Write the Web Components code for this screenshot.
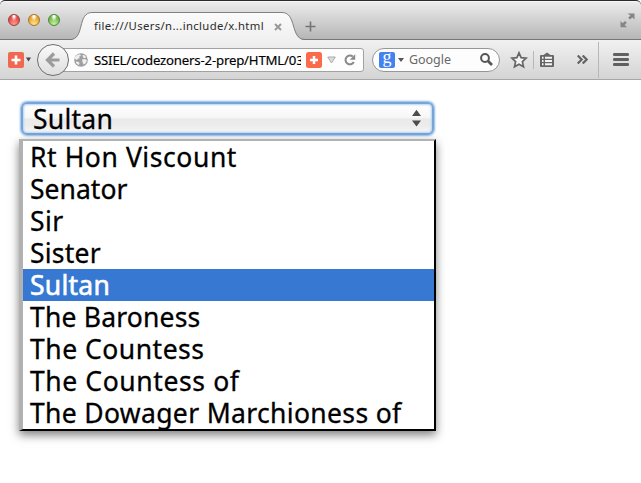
<!DOCTYPE html>
<html lang="en">
<head>
<meta charset="utf-8">
<title>x.html</title>
<style>
html,body{margin:0;height:100%;overflow:hidden;background:#fff}
body{font-family:"Noto Sans","Open Sans",sans-serif;color:#000}
</style>
</head>
<body>
<browser-window>
  <title-bar slot="title"><browser-tab slot="tab"><fit-text w="170">file:///Users/n...include/x.html</fit-text></browser-tab></title-bar>
  <tool-bar slot="tools">
    <fit-text slot="url" w="209.5">SSIEL/codezoners-2-prep/HTML/03</fit-text>
    <fit-text slot="search" w="42">Google</fit-text>
  </tool-bar>
  <drop-select><fit-text w="80">Sultan</fit-text></drop-select>
  <option-list>
    <list-option><fit-text w="207">Rt Hon Viscount</fit-text></list-option>
    <list-option><fit-text w="97.5">Senator</fit-text></list-option>
    <list-option><fit-text w="33.5">Sir</fit-text></list-option>
    <list-option><fit-text w="71">Sister</fit-text></list-option>
    <list-option selected><fit-text w="80">Sultan</fit-text></list-option>
    <list-option><fit-text w="170.5">The Baroness</fit-text></list-option>
    <list-option><fit-text w="174.5">The Countess</fit-text></list-option>
    <list-option><fit-text w="209.5">The Countess of</fit-text></list-option>
    <list-option><fit-text w="371.5">The Dowager Marchioness of</fit-text></list-option>
  </option-list>
</browser-window>
<script>
const define = (name, html, ready) => customElements.define(name, class extends HTMLElement {
  constructor() {
    super();
    this.attachShadow({ mode: 'open' }).innerHTML = html;
  }
  connectedCallback() { if (ready) ready(this); }
});

// Text whose tracking is adjusted so that it spans the width in its "w" attribute.
define('fit-text', `<style>:host{display:inline-block;white-space:pre;flex:none}</style><slot></slot>`, el => {
  requestAnimationFrame(() => {
    const natural = el.getBoundingClientRect().width;
    const count = el.textContent.length;
    el.style.letterSpacing = ((+el.getAttribute('w') - natural) / count) + 'px';
  });
});

define('browser-window', `<style>
:host{display:flex;flex-direction:column;height:483px;width:641px;background:#fff}
main{display:flex;flex-direction:column;padding:22px 0 0 19px;align-items:flex-start}
</style><slot name="title"></slot><slot name="tools"></slot><main><slot></slot></main>`);

define('title-bar', `<style>
:host{display:flex;box-sizing:border-box;height:40px;border-top:1px solid #2d2730;background:linear-gradient(#ededed,#dcdcdc 30%,#b5b5b5);border-radius:5px 5px 0 0;box-shadow:inset 0 -1px #777,inset 0 1px #f6f6f6}
.lights{display:flex;gap:8px;padding:13px 0 0 8px;width:64px;flex:none}
i{width:12px;height:12px;box-sizing:border-box;border-radius:50%;border:1px solid;}
.r{background:radial-gradient(ellipse at 50% 12%,#fff 0 8%,#f7b0ac 20%,transparent 42%),radial-gradient(circle at 50% 90%,#ff9b92,#dc4b49 65%);border-color:#a33b39}
.y{background:radial-gradient(ellipse at 50% 12%,#fff 0 8%,#fbe0a6 20%,transparent 42%),radial-gradient(circle at 50% 90%,#ffe58b,#e6a231 65%);border-color:#a4742b}
.g{background:radial-gradient(ellipse at 50% 12%,#fff 0 8%,#d0eebc 20%,transparent 42%),radial-gradient(circle at 50% 90%,#c6f49e,#72b84d 65%);border-color:#4f8436}
.new{margin:20px 0 0 -1px;width:11px;height:11px;flex:none}
.full{margin:12px 6px 0 auto;width:15px;height:15px}
</style>
<div class="lights"><i class="r"></i><i class="y"></i><i class="g"></i></div>
<slot name="tab"></slot>
<svg class="new" viewBox="0 0 11 11"><path d="M5.5 .5v10M.5 5.5h10" stroke="#747474" stroke-width="1.6"/></svg>
<svg class="full" viewBox="0 0 15 15" fill="#858585"><path d="M7.5.5h7v6l-2.2-2.1-2.3 2.2-1.8-1.8 2.2-2.2zM.5 8l2.2 2.2L5 8l1.8 1.8L4.6 12l2.5 2.3H.5z"/></svg>`);

define('browser-tab', `<style>
:host{display:grid;width:234px;height:28px;margin-top:11px;flex:none}
svg,.in{grid-area:1/1}
.in{display:flex;font-size:11.3px;line-height:16px;color:#2b2b2b;padding:6px 0 0 22px;}
.x{width:8px;height:8px;margin:5px 0 0 10px}
</style>
<svg width="234" height="28" viewBox="0 0 234 28"><defs><linearGradient id="t" x2="0" y2="1"><stop stop-color="#fbfbfb"/><stop offset="1" stop-color="#f0f0f0"/></linearGradient></defs><path d="M-2 28C13 28 5 .5 20 .5H210C225 .5 218 28 233 28Z" fill="url(#t)"/><path d="M-2 27.500C13 27.500 5 .5 20 .5H210C225 .5 218 27.500 233 27.500" fill="none" stroke="#808080"/></svg>
<div class="in"><slot></slot><svg class="x" viewBox="0 0 8 8"><path d="M1 1l6 6M7 1L1 7" stroke="#999" stroke-width="2"/></svg></div>`);

define('tool-bar', `<style>
:host{display:flex;box-sizing:border-box;width:641px;height:40px;align-items:center;background:linear-gradient(#f1f1f1,#d4d4d4);border-bottom:1px solid #a7a7a7;padding-left:8px}
svg{flex:none;display:block}
.back{margin-left:5px;margin-right:-17px;z-index:1}
.url{box-sizing:border-box;width:311px;height:24px;border:1px solid #a1a1a1;border-radius:3px;background:#fdfdfd;display:flex;align-items:center;padding-left:20px;flex:none}
.clip{width:207px;margin-left:6px;overflow:hidden;font-size:13.2px;line-height:22px;display:flex;flex:none;-webkit-text-stroke:.15px}
.search{box-sizing:border-box;width:128px;height:24px;border:1px solid #969696;border-radius:12px;background:#fdfdfd;display:flex;align-items:center;padding-left:6px;margin-left:8px;flex:none;font-size:12.5px;color:#696969}
.g{width:16px;height:16px;background:#4382f0;border-radius:2px;color:#fff;font:18px/11px "Liberation Serif",serif;text-align:center;flex:none}
.sep{width:1px;background:#b5b8bb;flex:none}
</style>
<svg width="16" height="16"><rect width="16" height="16" rx="2" fill="#ef6950"/><path d="M8 3.500v9M3.500 8h9" stroke="#fff" stroke-width="2.600"/></svg>
<svg width="5" height="5" style="margin-left:2px" viewBox="0 0 5 5"><path d="M0 .5h5L2.500 4.500z" fill="#444"/></svg>
<svg class="back" width="34" height="34"><defs><linearGradient id="b" x2="0" y2="1"><stop stop-color="#fafafa"/><stop offset="1" stop-color="#dedede"/></linearGradient></defs><circle cx="17" cy="17" r="15.500" fill="url(#b)" stroke="#6d6d6d"/><path d="M18 10.500l-6.500 6.500 6.500 6.500M12 17H23.500" fill="none" stroke="#9c9c9c" stroke-width="3.200"/></svg>
<div class="url">
<svg width="14" height="14" viewBox="0 0 14 14"><circle cx="7" cy="7" r="6.800" fill="#9f9f9f"/><path d="M1 4l2-2 3-.8 1 1.500-2 1 .8 1.500-2 .5L3 7 1 6zM8.500 2l2 .3 1.800 2-1.500 1L9 4.500zM8 6.500l3-.5 2 1.500-1.500 3-2 1-1-2.500zM2 8.500l3 .5.5 2L4.500 12 2 10z" fill="#eee"/></svg>
<div class="clip"><slot name="url"></slot></div>
<svg style="margin-left:5px" width="16" height="16"><rect width="16" height="16" rx="2.500" fill="#fb6b4b"/><path d="M8 4v8M4 8h8" stroke="#fff" stroke-width="2.500"/></svg>
<svg style="margin-left:5px" width="9" height="8" viewBox="0 0 9 8"><path d="M.7 1h7.600L4.500 6.900z" fill="#ddd" stroke="#aaa"/></svg>
<svg style="margin-left:8px" width="12" height="12" viewBox="0 0 12 12"><path d="M8.800 2.600A4.400 4.400 0 1 0 9.800 8" fill="none" stroke="#8a8a8a" stroke-width="2"/><path d="M11.200.3v5.500H5.800z" fill="#8a8a8a"/></svg>
</div>
<div class="search"><span class="g">g</span><svg style="margin-left:3px" width="6" height="4"><path d="M0 0h6L3 4z" fill="#555"/></svg><span style="margin-left:5px;line-height:22px;display:flex;width:71px"><slot name="search"></slot></span>
<svg width="13" height="13" viewBox="0 0 13 13"><circle cx="5" cy="5" r="3.900" fill="none" stroke="#555" stroke-width="2"/><path d="M8 8l4 4" stroke="#555" stroke-width="2.600"/></svg></div>
<svg style="margin-left:10px" width="18" height="18" viewBox="0 0 18 18"><path d="M9 1.800l2.100 4.800 5 .5-3.700 3.500 1.100 5.200L9 13.200l-4.500 2.600 1.100-5.200L1.900 7.100l5-.5z" fill="#f4f4f4" stroke="#666" stroke-width="1.700"/></svg>
<span class="sep" style="height:18px;margin-left:5px"></span>
<svg style="margin-left:6px" width="14" height="16" viewBox="0 0 14 16"><path d="M0 4q0-1 1-1h2.500L7 .500l3.500 2.500H13q1 0 1 1v10q0 1-1 1H1q-1 0-1-1z" fill="#666"/><path d="M2 5.800h1.500M5 5.800h7M2 9h1.500M5 9h7M2 12.200h1.500M5 12.200h7" stroke="#f5f5f5" stroke-width="2"/></svg>
<svg style="margin-left:23px" width="11" height="9" viewBox="0 0 11 9"><path d="M.700.500l4 4-4 4M5.700.500l4 4-4 4" fill="none" stroke="#636363" stroke-width="2.200"/></svg>
<span class="sep" style="height:36px;margin-left:10px"></span>
<svg style="margin-left:14px" width="16" height="13"><g fill="#606060"><rect width="16" height="3" rx="1.300"/><rect y="5" width="16" height="3" rx="1.300"/><rect y="10" width="16" height="3" rx="1.300"/></g></svg>`);

define('drop-select', `<style>
:host{display:flex;box-sizing:border-box;margin-left:2px;width:413px;height:33px;border:2px solid #77a5d8;border-radius:6px;background:linear-gradient(#fff 0,#f7f7f7 46%,#eaeaea 52%,#ececec 75%,#f8f8f8);box-shadow:0 0 2px 1px #8bb8e8,inset 0 0 2px 1px #b4d2f3;align-items:center;padding:0 11px 0 10px;font-size:26.5px;line-height:30px;justify-content:space-between;-webkit-text-stroke:.3px}
</style><slot></slot><svg width="9" height="18" viewBox="0 0 9 18" fill="#4d4d4d" style="margin-bottom:1px"><path d="M0 7L4.500.8 9 7zM0 11.500h9L4.500 17.500z"/></svg>`);

define('option-list', `<style>
:host{display:block;box-sizing:border-box;width:417px;margin-top:4px;border:solid;border-width:2px 2px 2px 4px;border-color:#b2b2b2 #000 #000 #b2b2b2;background:#fff;box-shadow:0 4px 9px rgba(0,0,0,.5)}
</style><slot></slot>`);

define('list-option', `<style>
:host{display:flex;height:32px;padding-left:7px;font-size:26.5px;line-height:32px;-webkit-text-stroke:.3px}
:host([selected]){background:#3778d2;color:#fff;-webkit-text-stroke:.6px #fff}
</style><slot></slot>`);
</script>
</body>
</html>
